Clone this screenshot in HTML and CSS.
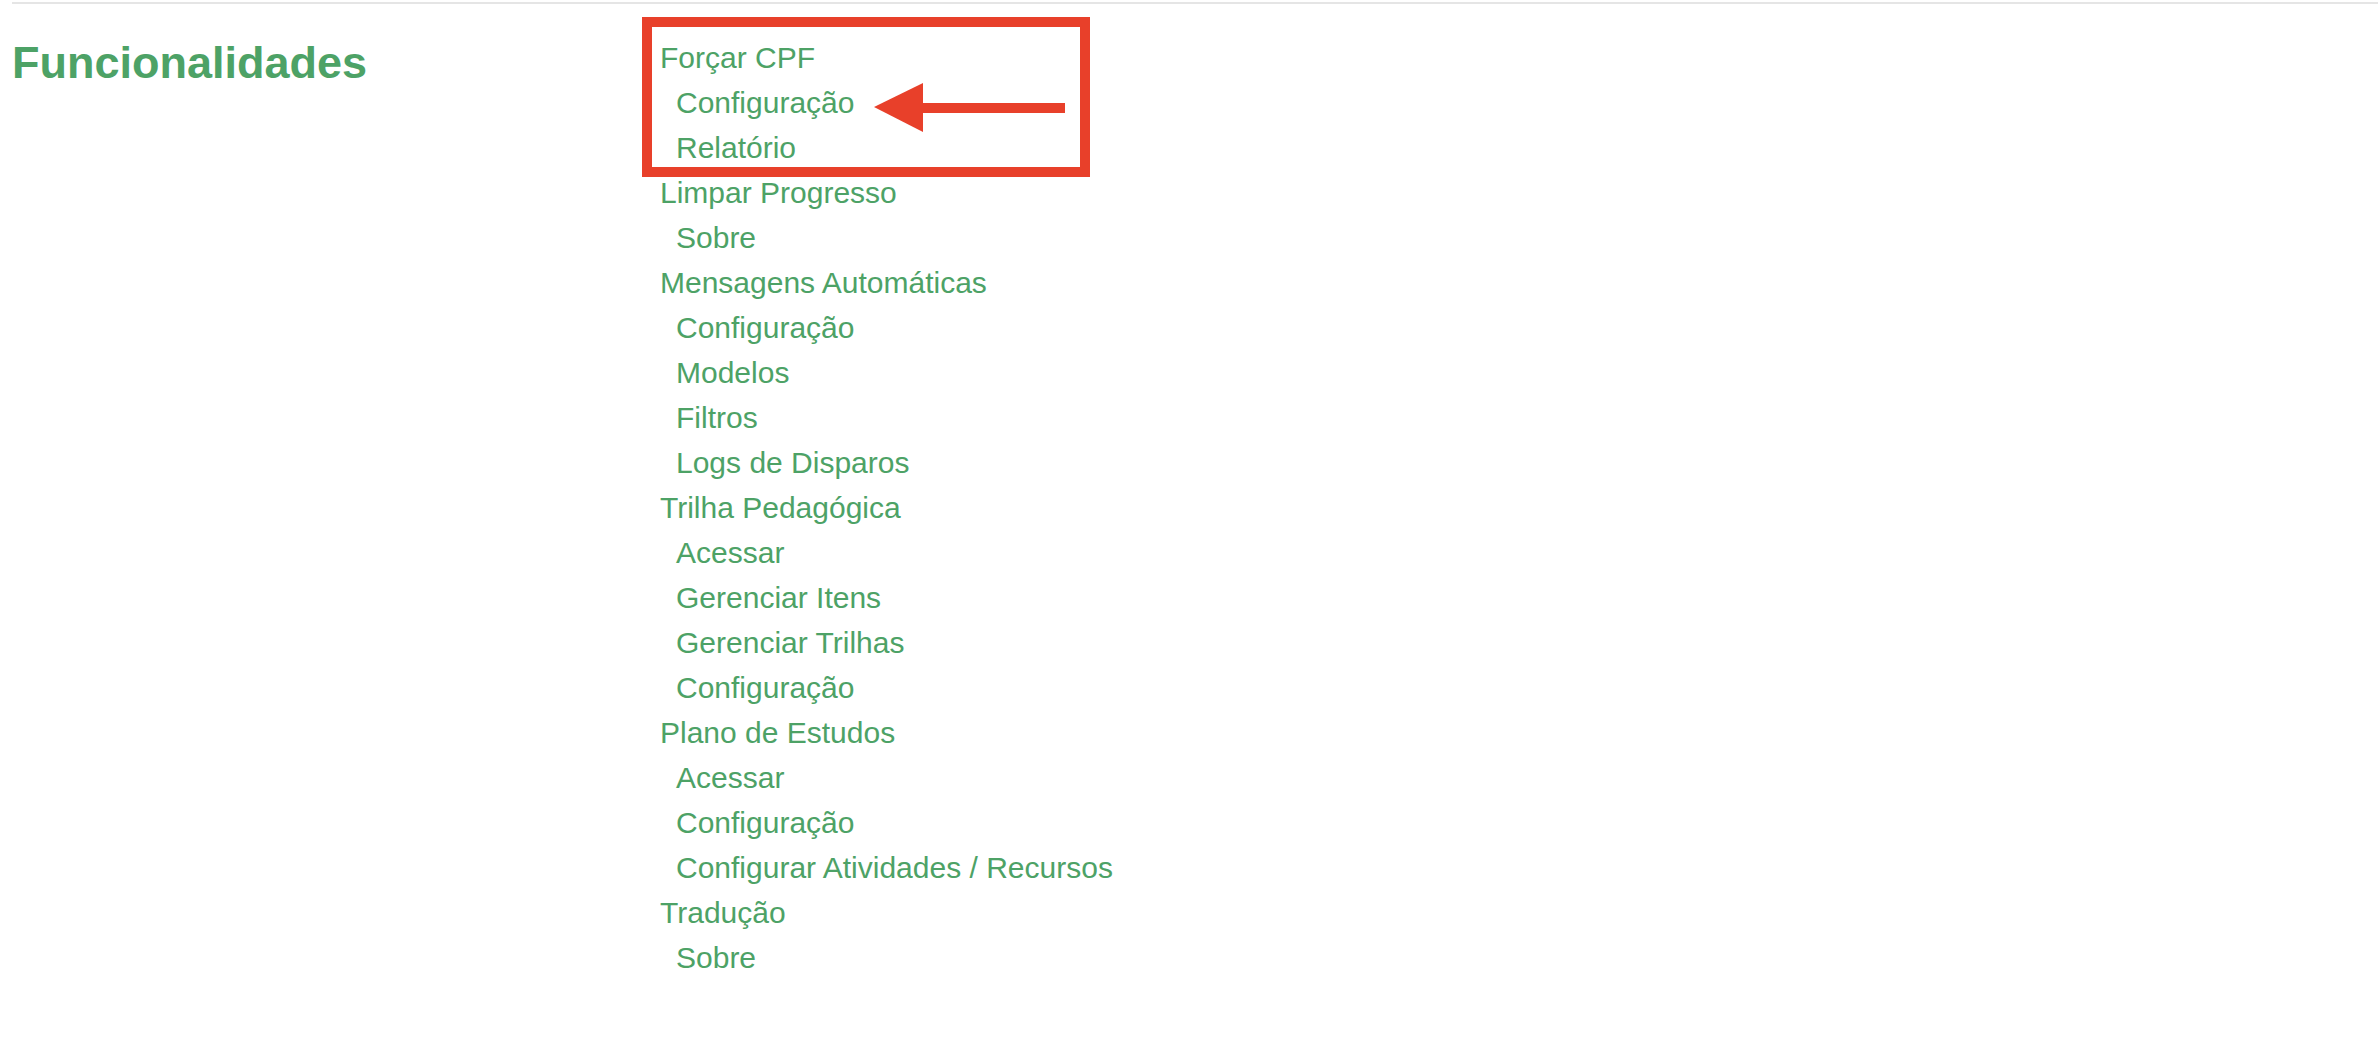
FILE: index.html
```html
<!DOCTYPE html>
<html lang="pt-BR">
<head>
<meta charset="UTF-8">
<meta name="viewport" content="width=device-width, initial-scale=1">
<title>Funcionalidades</title>
<link rel="stylesheet" href="styles.css">
</head>
<body>
<section class="features">
  <h2 class="features-title">Funcionalidades</h2>

  <div class="menu">
    <ul class="menu-list">
      <li><a href="#">Forçar CPF</a>
        <ul>
          <li><a href="#">Configuração</a></li>
          <li><a href="#">Relatório</a></li>
        </ul>
      </li>
      <li><a href="#">Limpar Progresso</a>
        <ul>
          <li><a href="#">Sobre</a></li>
        </ul>
      </li>
      <li><a href="#">Mensagens Automáticas</a>
        <ul>
          <li><a href="#">Configuração</a></li>
          <li><a href="#">Modelos</a></li>
          <li><a href="#">Filtros</a></li>
          <li><a href="#">Logs de Disparos</a></li>
        </ul>
      </li>
      <li><a href="#">Trilha Pedagógica</a>
        <ul>
          <li><a href="#">Acessar</a></li>
          <li><a href="#">Gerenciar Itens</a></li>
          <li><a href="#">Gerenciar Trilhas</a></li>
          <li><a href="#">Configuração</a></li>
        </ul>
      </li>
      <li><a href="#">Plano de Estudos</a>
        <ul>
          <li><a href="#">Acessar</a></li>
          <li><a href="#">Configuração</a></li>
          <li><a href="#">Configurar Atividades / Recursos</a></li>
        </ul>
      </li>
      <li><a href="#">Tradução</a>
        <ul>
          <li><a href="#">Sobre</a></li>
        </ul>
      </li>
    </ul>

    <!-- anotação: destaque + seta -->
    <div class="mark-box"></div>
    <svg class="mark-arrow" width="191" height="49" viewBox="0 0 191 49">
      <polygon points="0,24 49,0 49,49" fill="#e8402a"/>
      <rect x="48" y="20" width="143" height="10" fill="#e8402a"/>
    </svg>
  </div>
</section>
</body>
</html>
```

FILE: styles.css
```css
:root{
  --green:#4da266;--red:#e8402a;--rule:#e5e5e5;--bg:#ffffff
}
*{box-sizing:border-box;margin:0;padding:0}
body{background:var(--bg);font-family:"Liberation Sans",Arial,Helvetica,sans-serif;color:var(--green)}

.features{display:grid;grid-template-columns:648px 1fr;margin:2px 0 0 12px;padding-top:31px;border-top:2px solid var(--rule)}
.features-title{font-size:45px;line-height:56px;font-weight:700;color:var(--green)}

.menu{position:relative}
.menu-list{list-style:none;font-size:30px;line-height:45px}
.menu-list ul{list-style:none;padding-left:16px}
.menu-list a{color:var(--green);text-decoration:none}

.mark-box{position:absolute;left:-18px;top:-18px;width:448px;height:160px;border:10px solid var(--red)}
.mark-arrow{position:absolute;left:214px;top:48px;display:block}
```
